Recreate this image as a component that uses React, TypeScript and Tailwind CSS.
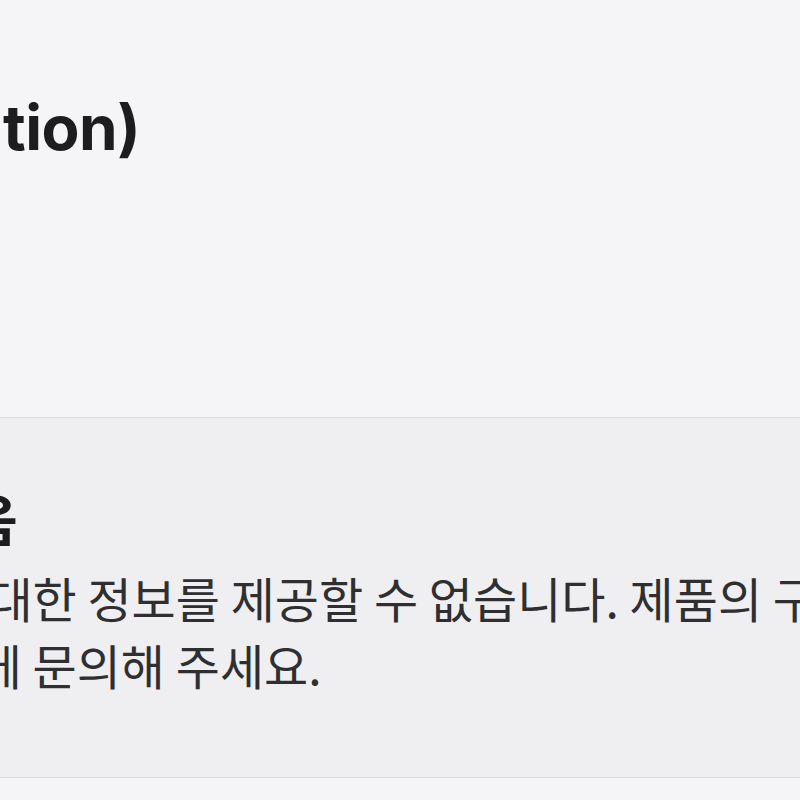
export default function App() {
  return (
    <div className="w-[800px] h-[800px] overflow-hidden bg-[#f5f5f7] text-[#1d1d1f] font-['Inter','Noto_Sans_CJK_KR',sans-serif]">
      <div className="w-[1400px]">
        <section className="h-[418px] border-b border-[#dcdce0] pt-[91px]">
          <h1 className="-ml-[756px] whitespace-nowrap text-[62px] font-bold leading-[1.2] tracking-[-0.5px]">
            상세 정보 (Product Information)
          </h1>
        </section>
        <section className="h-[360px] border-b border-[#dcdce0] bg-[#efeff1] pt-[63px] font-['Noto_Sans_CJK_KR',sans-serif]">
          <h2 className="-ml-[201px] whitespace-nowrap text-[56px] font-bold leading-[1.3]">
            정보 없음
          </h2>
          <p className="-ml-[199px] mt-[10px] whitespace-nowrap text-[48px] leading-[67px] text-[#2f2f32]">
            원재료에 대한 정보를 제공할 수 없습니다. 제품의 구매처 또는
            <br />
            판매업체에 문의해 주세요.
          </p>
        </section>
      </div>
    </div>
  );
}
